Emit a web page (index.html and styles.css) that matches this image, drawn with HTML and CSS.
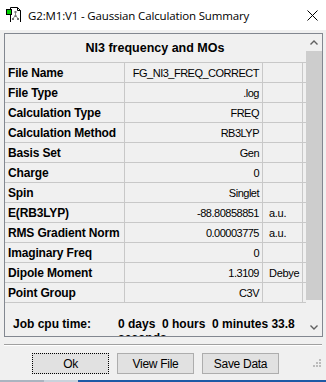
FILE: index.html
```html
<!DOCTYPE html>
<html lang="en">
<head>
    <meta charset="UTF-8">
    <title>G2:M1:V1 - Gaussian Calculation Summary</title>
    <link rel="stylesheet" href="styles.css">
</head>
<body>
    <div class="window">
        <div class="titlebar">
            <svg class="app-icon" width="16" height="16" viewBox="0 0 16 16">
                <path d="M5.5 1.5h7l3 3v12h-10z" fill="#fff" stroke="#000"/>
                <path d="M12.5 1.5v3h3" fill="none" stroke="#000"/>
                <line x1="10.5" y1="6" x2="10.5" y2="9.5" stroke="#888"/>
                <line x1="10.5" y1="9.5" x2="8" y2="12.5" stroke="#888"/>
                <line x1="10.5" y1="9.5" x2="13" y2="12.5" stroke="#888"/>
                <rect x="9.5" y="5" width="2" height="2" fill="#777"/>
                <rect x="9.5" y="9" width="2" height="2" fill="#777"/>
                <rect x="7" y="12" width="2" height="2" fill="#777"/>
                <rect x="12" y="12" width="2" height="2" fill="#777"/>
                <rect x="1.5" y="3.5" width="5" height="5" fill="#00d000" stroke="#000"/>
            </svg>
            <span class="title">G2:M1:V1 - Gaussian Calculation Summary</span>
            <svg class="close" width="11" height="11" viewBox="0 0 11 11">
                <path d="M0.5 0.5l10 10M10.5 0.5l-10 10" stroke="#000" stroke-width="1"/>
            </svg>
        </div>

        <div class="panel">
            <div class="content">
                <div class="heading">NI3 frequency and MOs</div>
                <div class="grid">
                    <div class="row"><div class="key">File Name</div><div class="val">FG_NI3_FREQ_CORRECT</div><div class="unit"></div></div>
                    <div class="row"><div class="key">File Type</div><div class="val">.log</div><div class="unit"></div></div>
                    <div class="row"><div class="key">Calculation Type</div><div class="val">FREQ</div><div class="unit"></div></div>
                    <div class="row"><div class="key">Calculation Method</div><div class="val">RB3LYP</div><div class="unit"></div></div>
                    <div class="row"><div class="key">Basis Set</div><div class="val">Gen</div><div class="unit"></div></div>
                    <div class="row"><div class="key">Charge</div><div class="val">0</div><div class="unit"></div></div>
                    <div class="row"><div class="key">Spin</div><div class="val">Singlet</div><div class="unit"></div></div>
                    <div class="row"><div class="key">E(RB3LYP)</div><div class="val">-88.80858851</div><div class="unit">a.u.</div></div>
                    <div class="row"><div class="key">RMS Gradient Norm</div><div class="val">0.00003775</div><div class="unit">a.u.</div></div>
                    <div class="row"><div class="key">Imaginary Freq</div><div class="val">0</div><div class="unit"></div></div>
                    <div class="row"><div class="key">Dipole Moment</div><div class="val">1.3109</div><div class="unit">Debye</div></div>
                    <div class="row"><div class="key">Point Group</div><div class="val">C3V</div><div class="unit"></div></div>
                </div>
                <div class="cpu">
                    <span class="cpu-label">Job cpu time:</span>
                    <span class="cpu-value">0 days&nbsp; 0 hours&nbsp; 0 minutes 33.8 seconds</span>
                </div>
            </div>
            <div class="scrollbar">
                <svg class="arrow" width="16" height="17" viewBox="0 0 16 17">
                    <path d="M4.5 10.5l3.5-3.5 3.5 3.5" fill="none" stroke="#606060" stroke-width="1.4"/>
                </svg>
                <div class="thumb"></div>
                <div class="track"></div>
                <svg class="arrow" width="16" height="17" viewBox="0 0 16 17">
                    <path d="M4.5 6.5l3.5 3.5 3.5-3.5" fill="none" stroke="#606060" stroke-width="1.4"/>
                </svg>
            </div>
        </div>

        <div class="separator"></div>

        <div class="buttons">
            <button class="btn focused">Ok</button>
            <button class="btn">View File</button>
            <button class="btn">Save Data</button>
            <svg class="grip" width="10" height="10" viewBox="0 0 10 10">
                <rect x="7" y="1" width="2" height="2" fill="#bcbcbc"/>
                <rect x="4" y="4" width="2" height="2" fill="#bcbcbc"/>
                <rect x="7" y="4" width="2" height="2" fill="#bcbcbc"/>
                <rect x="1" y="7" width="2" height="2" fill="#bcbcbc"/>
                <rect x="4" y="7" width="2" height="2" fill="#bcbcbc"/>
                <rect x="7" y="7" width="2" height="2" fill="#bcbcbc"/>
            </svg>
        </div>

        <div class="taskbar">
            <div class="tb-a"></div>
            <div class="tb-b"></div>
            <div class="tb-c"></div>
        </div>
    </div>
</body>
</html>
```

FILE: styles.css
```css
body {
    margin: 0;
    font-family: "Liberation Sans", Arial, sans-serif;
    color: #000;
}
.window {
    width: 326px;
    height: 382px;
    background: #f0f0f0;
    display: flex;
    flex-direction: column;
    overflow: hidden;
}
.titlebar {
    height: 30px;
    background: #fff;
    display: flex;
    align-items: center;
    flex-shrink: 0;
}
.app-icon {
    margin-left: 5px;
    margin-top: -2px;
}
.title {
    margin-left: 7px;
    font-family: "Open Sans", "Noto Sans", sans-serif;
    font-size: 11.5px;
    color: #000;
    flex: 1;
    letter-spacing: -0.15px;
}
.close {
    margin-right: 8px;
}
.panel {
    margin: 3px 0 0 4px;
    width: 317px;
    height: 302px;
    border: 1px solid #828790;
    display: flex;
    flex-shrink: 0;
}
.content {
    width: 301px;
    overflow: hidden;
}
.heading {
    height: 28px;
    line-height: 29px;
    text-align: center;
    font-weight: bold;
    font-size: 12.5px;
    padding-right: 1px;
}
.row {
    display: grid;
    grid-template-columns: 120px 138px 40px;
    height: 19px;
    border-top: 1px solid #c8c8c8;
}
.row:last-child {
    border-bottom: 1px solid #c8c8c8;
}
.row > div {
    border-right: 1px solid #c8c8c8;
    line-height: 20px;
    font-size: 11px;
    white-space: nowrap;
    overflow: hidden;
}
.row > .key {
    font-weight: bold;
    font-size: 12px;
    padding-left: 3px;
    letter-spacing: -0.15px;
}
.val {
    text-align: right;
    padding-right: 3px;
    letter-spacing: -0.5px;
}
.unit {
    padding-left: 6px;
    letter-spacing: -0.3px;
}
.cpu {
    display: flex;
    padding: 14px 0 0 8px;
    font-weight: bold;
    font-size: 12px;
    line-height: 14px;
}
.cpu-label {
    width: 105px;
    flex-shrink: 0;
}
.cpu-value {
    width: 182px;
}
.scrollbar {
    width: 16px;
    display: flex;
    flex-direction: column;
    background: #f0f0f0;
}
.arrow {
    flex-shrink: 0;
}
.thumb {
    height: 249px;
    background: #cdcdcd;
    flex-shrink: 0;
}
.track {
    flex: 1;
}
.separator {
    margin: 7px 4px 0 4px;
    height: 0;
    border-top: 1px solid #a0a0a0;
    border-bottom: 1px solid #fff;
    flex-shrink: 0;
}
.buttons {
    display: flex;
    align-items: flex-start;
    padding: 7px 0 0 32px;
    gap: 8px;
    height: 27px;
    flex-shrink: 0;
    position: relative;
}
.btn {
    width: 77px;
    height: 21px;
    background: #e1e1e1;
    border: 1px solid #adadad;
    font-family: "Liberation Sans", Arial, sans-serif;
    font-size: 12px;
    color: #000;
    padding: 0;
    letter-spacing: -0.3px;
}
.btn.focused {
    border: 1px dotted #000;
}
.grip {
    position: absolute;
    right: 4px;
    top: 12px;
}
.taskbar {
    margin-top: auto;
    height: 3px;
    display: flex;
    flex-shrink: 0;
}
.tb-a {
    width: 44px;
    background: #aab4c0;
}
.tb-b {
    width: 34px;
    background: #c9d2dc;
}
.tb-c {
    flex: 1;
    background: #1d5aa6;
}
```
